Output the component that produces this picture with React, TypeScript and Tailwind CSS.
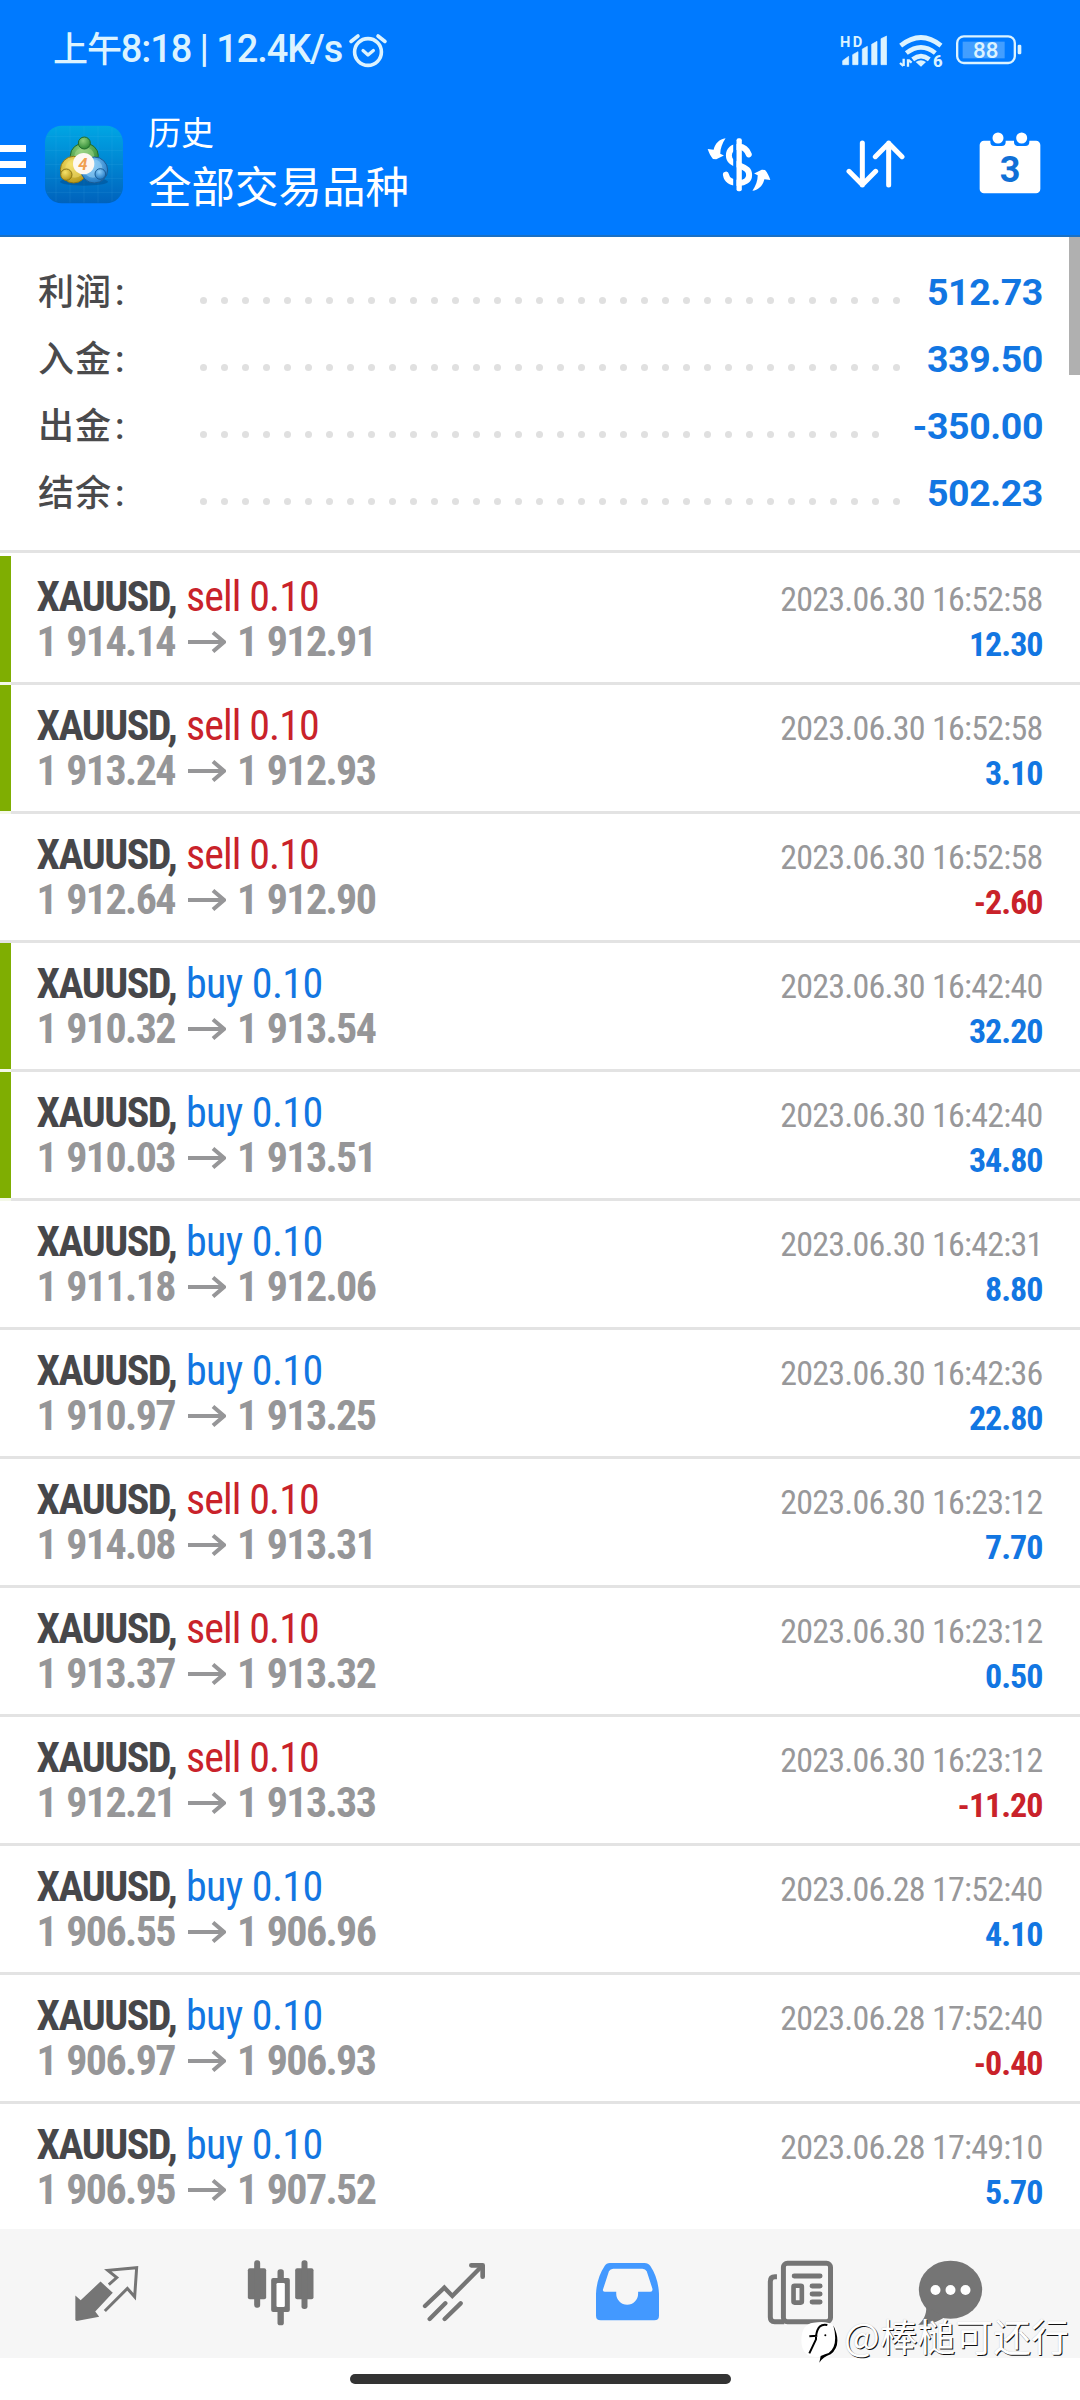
import type { ReactNode } from 'react';

type Deal = {
    side: 'sell' | 'buy';
    open: string;
    close: string;
    time: string;
    profit: string;
    marked?: boolean;
};

const summary = [
    { label: '利润', value: '512.73', dots: 34 },
    { label: '入金', value: '339.50', dots: 34 },
    { label: '出金', value: '-350.00', dots: 33 },
    { label: '结余', value: '502.23', dots: 34 },
];

const deals: Deal[] = [
    { side: 'sell', open: '1 914.14', close: '1 912.91', time: '2023.06.30 16:52:58', profit: '12.30', marked: true },
    { side: 'sell', open: '1 913.24', close: '1 912.93', time: '2023.06.30 16:52:58', profit: '3.10', marked: true },
    { side: 'sell', open: '1 912.64', close: '1 912.90', time: '2023.06.30 16:52:58', profit: '-2.60' },
    { side: 'buy', open: '1 910.32', close: '1 913.54', time: '2023.06.30 16:42:40', profit: '32.20', marked: true },
    { side: 'buy', open: '1 910.03', close: '1 913.51', time: '2023.06.30 16:42:40', profit: '34.80', marked: true },
    { side: 'buy', open: '1 911.18', close: '1 912.06', time: '2023.06.30 16:42:31', profit: '8.80' },
    { side: 'buy', open: '1 910.97', close: '1 913.25', time: '2023.06.30 16:42:36', profit: '22.80' },
    { side: 'sell', open: '1 914.08', close: '1 913.31', time: '2023.06.30 16:23:12', profit: '7.70' },
    { side: 'sell', open: '1 913.37', close: '1 913.32', time: '2023.06.30 16:23:12', profit: '0.50' },
    { side: 'sell', open: '1 912.21', close: '1 913.33', time: '2023.06.30 16:23:12', profit: '-11.20' },
    { side: 'buy', open: '1 906.55', close: '1 906.96', time: '2023.06.28 17:52:40', profit: '4.10' },
    { side: 'buy', open: '1 906.97', close: '1 906.93', time: '2023.06.28 17:52:40', profit: '-0.40' },
    { side: 'buy', open: '1 906.95', close: '1 907.52', time: '2023.06.28 17:49:10', profit: '5.70' },
];

function AlarmIcon() {
    return (
        <svg className="w-[40px] h-[37px]" viewBox="0 0 40 37" fill="none" stroke="currentColor" strokeWidth="3.6" strokeLinecap="round" strokeLinejoin="round">
            <circle cx="20" cy="20" r="13.4" />
            <path d="M3 9.5 10 4M37 9.5 30 4" />
            <path d="M15 18.5 20 23l5.4-4.5" strokeWidth="3.2" />
        </svg>
    );
}

function SignalIcon() {
    return (
        <svg className="w-[47px] h-[38px]" viewBox="0 -9 141 114" fill="currentColor">
            <text x="0" y="38" fontSize="44" fontWeight="700" textLength="67" className="font-['Roboto']">HD</text>
            <path d="M8 92V80L26 67V92ZM38 92V62L54 53V92ZM67 92V45L82 37V92ZM95 92V31L111 22V92ZM123 92V14L140 6V92Z" stroke="currentColor" strokeWidth="2" strokeLinejoin="round" />
        </svg>
    );
}

function WifiIcon() {
    return (
        <svg className="w-[46px] h-[46px]" viewBox="0 -18 138 138" fill="none" stroke="currentColor" strokeWidth="14">
            <path d="M5 35Q66-14 126 35" />
            <path d="M22 57Q66 23 109 57" />
            <path d="M41 76Q66 57 91 76" />
            <path d="M50 84Q66 74 81 84L66 98Z" fill="currentColor" stroke="none" />
            <path d="M14 74V96M3 87 13 96M27 98V76M38 86 28 78" strokeWidth="7" />
            <text x="102" y="100" fontSize="50" fontWeight="800" fill="currentColor" stroke="none" className="font-['Roboto']">6</text>
        </svg>
    );
}

function BatteryIcon() {
    return (
        <svg className="w-[67px] h-[30px]" viewBox="0 0 201 90" fill="currentColor">
            <rect x="3.5" y="4" width="173" height="80" rx="20" fill="none" stroke="currentColor" strokeWidth="7" />
            <rect x="20" y="20" width="126" height="50" opacity="0.3" />
            <rect x="185" y="29" width="11" height="29" rx="4" />
            <text x="89" y="68" fontSize="67" fontWeight="500" textAnchor="middle" className="font-['Roboto']">88</text>
        </svg>
    );
}

function AppLogo() {
    return (
        <svg className="w-[80px] h-[79px]" viewBox="0 0 240 237">
            <defs>
                <linearGradient id="tile" x1="0" y1="0" x2="0" y2="1">
                    <stop offset="0" stopColor="#00a6e4" />
                    <stop offset="0.5" stopColor="#0085d2" />
                    <stop offset="1" stopColor="#0062bc" />
                </linearGradient>
                <radialGradient id="green" cx="0.4" cy="0.3" r="0.7">
                    <stop offset="0" stopColor="#8fd07c" />
                    <stop offset="1" stopColor="#2f8a36" />
                </radialGradient>
                <radialGradient id="yellow" cx="0.4" cy="0.3" r="0.7">
                    <stop offset="0" stopColor="#f6e26a" />
                    <stop offset="1" stopColor="#b99a1c" />
                </radialGradient>
                <radialGradient id="blue" cx="0.4" cy="0.3" r="0.7">
                    <stop offset="0" stopColor="#8fd0fb" />
                    <stop offset="1" stopColor="#2079c4" />
                </radialGradient>
            </defs>
            <rect x="3" y="2" width="234" height="233" rx="50" fill="url(#tile)" />
            <path d="M36 8V229M78 4V233M120 4V233M162 4V233M204 8V229M8 34H232M4 76H236M4 118H236M4 160H236M8 202H232" stroke="#5cc4ee" strokeOpacity="0.18" strokeWidth="2" />
            <ellipse cx="120" cy="170" rx="72" ry="12" fill="#00407c" opacity="0.4" />
            <g strokeWidth="3">
                <ellipse cx="121" cy="92" rx="42" ry="38" fill="url(#green)" stroke="#1f6b2c" />
                <ellipse cx="121" cy="92" rx="30" ry="25" fill="#a4d889" opacity="0.5" />
                <ellipse cx="89" cy="134" rx="40" ry="40" fill="url(#yellow)" stroke="#8a7516" />
                <ellipse cx="92" cy="130" rx="28" ry="28" fill="#f3df72" opacity="0.5" />
                <ellipse cx="151" cy="135" rx="40" ry="39" fill="url(#blue)" stroke="#1a5c96" />
                <ellipse cx="147" cy="130" rx="28" ry="28" fill="#8fcdf5" opacity="0.6" />
                <circle cx="121" cy="54" r="18" fill="url(#green)" stroke="#1f6b2c" />
                <circle cx="67" cy="149" r="17" fill="url(#yellow)" stroke="#8a7516" />
                <circle cx="169" cy="147" r="16" fill="url(#blue)" stroke="#1a5c96" />
            </g>
            <circle cx="119" cy="116" r="32" fill="#fdf8f2" />
            <text x="117" y="134" fontSize="50" fontWeight="700" fontStyle="italic" textAnchor="middle" fill="#f0a050" className="font-['Roboto']">4</text>
        </svg>
    );
}

function CurrencyIcon() {
    const arrow = 'M56 3C38 6 24 18 20 38L2 36C6 48 11 58 18 66L28 67 51 55 40 50C40 34 46 18 56 3Z';
    return (
        <svg className="w-[64px] h-[55px]" viewBox="0 0 193 165" fill="white">
            <path d={arrow} />
            <path d={arrow} transform="rotate(180 96.5 82.5)" />
            <path d="M126 52C120 36 108 29 96 29C76 29 66 40 66 55C66 76 86 80 100 86C120 94 127 100 127 114C127 130 114 138 96 138C74 138 60 130 57 113" fill="none" stroke="white" strokeWidth="18" strokeLinecap="round" />
            <path d="M84 10V156" stroke="#007aff" strokeWidth="10" />
            <rect x="89" y="3" width="16" height="160" rx="6" />
        </svg>
    );
}

function SortIcon() {
    return (
        <svg className="w-[59px] h-[48px]" viewBox="0 0 177 144" fill="none" stroke="white" strokeWidth="15" strokeLinecap="round" strokeLinejoin="round">
            <path d="M49 9V135M9 94 49 134 89 94" />
            <path d="M128 135V9M88 50 128 10 168 50" />
        </svg>
    );
}

function CalendarIcon() {
    return (
        <svg className="w-[62px] h-[62px]" viewBox="0 0 186 186">
            <rect x="2" y="26" width="182" height="158" rx="13" fill="white" />
            <rect x="34" y="6" width="46" height="36" rx="12" fill="#007aff" />
            <rect x="105" y="6" width="46" height="36" rx="12" fill="#007aff" />
            <circle cx="57" cy="18" r="16.5" fill="white" />
            <circle cx="128" cy="18" r="16.5" fill="white" />
            <text x="93" y="151" fontSize="108" fontWeight="700" textAnchor="middle" fill="#1070d6" className="font-['Roboto']">3</text>
        </svg>
    );
}

function TradeIcon() {
    return (
        <svg className="w-[65px] h-[57px]" viewBox="0 0 196 172" fill="currentColor">
            <path d="M80 50 117 84 64 140 76 156 8 169 4 166V92L20 106Z" />
            <path d="M105 59 129 38 102 16 189 8 183 96 161 71 93 139" fill="none" stroke="currentColor" strokeWidth="9" />
        </svg>
    );
}

function CandlesIcon() {
    return (
        <svg className="w-[67px] h-[66px]" viewBox="0 0 200 198" fill="currentColor">
            <rect x="2" y="25" width="55" height="93" rx="6" />
            <rect x="21" y="1" width="18" height="142" rx="8" />
            <rect x="91" y="28" width="19" height="168" rx="8" />
            <rect x="72" y="54" width="56" height="102" rx="6" />
            <rect x="88" y="69" width="25" height="72" rx="4" fill="white" />
            <rect x="144" y="25" width="55" height="93" rx="6" />
            <rect x="163" y="1" width="18" height="146" rx="8" />
        </svg>
    );
}

function TrendIcon() {
    return (
        <svg className="w-[64px] h-[60px]" viewBox="0 0 192 180" fill="none" stroke="currentColor" strokeWidth="13">
            <path d="M9 132 67 77 91 102 180 12" strokeLinecap="round" />
            <path d="M148 10H182V44" strokeWidth="14" strokeLinecap="round" strokeLinejoin="round" />
            <path d="M23 171 70 124M68 171 116 124" strokeLinecap="round" />
        </svg>
    );
}

function InboxIcon() {
    return (
        <svg className="w-[65px] h-[59px]" viewBox="0 0 194 178">
            <path
                fill="#4399ff"
                fillRule="evenodd"
                d="M44 3H148Q160 3 166 12Q190 48 192 96V162Q192 176 178 176H16Q2 176 2 162V96Q4 48 28 12Q33 3 44 3ZM54 20Q45 20 41 28L24 80Q20 90 28 90H63V96A33 33 0 0 0 129 96V90H166Q174 90 172 80L155 28Q151 20 142 20Z"
            />
        </svg>
    );
}

function NewsIcon() {
    return (
        <svg className="w-[67px] h-[65px]" viewBox="0 0 202 195" fill="none" stroke="currentColor">
            <rect x="49.5" y="9.5" width="142" height="176" rx="12" strokeWidth="15" />
            <path d="M30 50H24Q10 50 10 64V172Q10 185.500 23 185.500H52" strokeWidth="15" />
            <path d="M82 48H160M136 78H160M136 102H160M136 126H160" strokeWidth="15" strokeLinecap="round" />
            <rect x="80" y="77" width="25" height="51" rx="3" strokeWidth="14" />
        </svg>
    );
}

function ChatIcon() {
    return (
        <svg className="w-[65px] h-[66px]" viewBox="0 0 194 198" fill="currentColor">
            <ellipse cx="97" cy="89" rx="95" ry="87" />
            <path d="M24 140C26 165 14 182 0 194C30 194 60 186 80 170Z" />
            <circle cx="52" cy="90" r="15" fill="white" />
            <circle cx="97" cy="90" r="15" fill="white" />
            <circle cx="142" cy="90" r="15" fill="white" />
        </svg>
    );
}

function DealRow({ deal }: { deal: Deal }) {
    const loss = deal.profit.startsWith('-');
    return (
        <div className="flex h-[129px] shrink-0 border-b-[3px] border-[#e3e3e3]">
            <div className={deal.marked ? 'w-[10.500px] shadow-[0_3px_0_#f4f8e8] bg-[#7fae02]' : 'w-[10.500px]'} />
            <div className="flex flex-1 justify-between pl-[26px] pr-[37.500px] whitespace-nowrap [font-stretch:75%]">
                <div className="pt-[18px] text-[42px] leading-[45px]">
                    <div>
                        <span className="font-bold tracking-[-1.5px] text-[#47474a]">XAUUSD,</span>{' '}
                        <span className={deal.side === 'sell' ? 'tracking-[-0.9px] text-[#c9222a]' : 'tracking-[-0.6px] text-[#1276e2]'}>{deal.side} 0.10</span>
                    </div>
                    <div className="flex items-center font-bold text-[#969698] tracking-[-1.6px] [word-spacing:2px]">
                        <span>{deal.open}</span>
                        <svg className="ml-[13px] mr-[11px] w-[38px] h-[22px]" viewBox="0 0 38 22" fill="none" stroke="currentColor" strokeWidth="4">
                            <path d="M0 11H36M25 1.500 36 11 25 20.500" />
                        </svg>
                        <span>{deal.close}</span>
                    </div>
                </div>
                <div className="pt-[21px] text-right text-[34px] leading-[45px]">
                    <div className="tracking-[-0.75px] text-[#98989a]">{deal.time}</div>
                    <div className={loss ? 'font-bold tracking-[-1px] text-[#c9222a]' : 'font-bold tracking-[-1px] text-[#1276e2]'}>{deal.profit}</div>
                </div>
            </div>
        </div>
    );
}

function NavItem({ children }: { children: ReactNode }) {
    return <button className="flex w-[173.500px] justify-center">{children}</button>;
}

export default function App() {
    return (
        <div className="relative flex h-[2400px] w-[1080px] flex-col overflow-hidden bg-white font-['Roboto','Noto_Sans_CJK_SC',sans-serif]">
            {/* Header */}
            <header className="h-[237px] shrink-0 border-b-2 border-[#1a70c4] bg-[#007aff]">
                <div className="flex h-[100px] items-center justify-between pl-[53px] pr-[57px] text-[#dcf3ff]">
                    <div className="flex items-center">
                        <span className="whitespace-pre text-[38px] leading-[44px] font-medium tracking-[-1.1px]">
                            <span className="text-[35px]">上午</span>8:18 | 12.4K/s
                        </span>
                        <span className="ml-[6px]"><AlarmIcon /></span>
                    </div>
                    <div className="flex items-center">
                        <SignalIcon />
                        <span className="ml-[12px] mt-[2px]"><WifiIcon /></span>
                        <span className="ml-[11px]"><BatteryIcon /></span>
                    </div>
                </div>
                <div className="flex h-[128px] items-center">
                    <div className="flex w-[26px] flex-col gap-[9px]">
                        <div className="h-[7px] bg-white" />
                        <div className="h-[7px] bg-white" />
                        <div className="h-[7px] bg-white" />
                    </div>
                    <div className="ml-[18px]"><AppLogo /></div>
                    <div className="ml-[24px] flex-1 text-white">
                        <div className="text-[33px] leading-[48px]">历史</div>
                        <div className="mt-[1px] text-[43.500px] leading-[60px]">全部交易品种</div>
                    </div>
                    <div className="flex items-center pr-[39px]">
                        <CurrencyIcon />
                        <span className="ml-[75px]"><SortIcon /></span>
                        <span className="ml-[74px] mb-[3px]"><CalendarIcon /></span>
                    </div>
                </div>
            </header>

            {/* Account summary */}
            <section className="flex h-[316px] shrink-0 flex-col border-b-[3px] border-[#e3e3e3] pt-[22px]">
                {summary.map((row) => (
                    <div key={row.label} className="flex h-[67px] items-center justify-between pl-[38px] pr-[37px]">
                        <div className="flex w-[162px] text-[36px] font-medium tracking-[1px] text-[#4a4a4c]">
                            {row.label}
                            <span className="ml-[3px]">:</span>
                        </div>
                        <div className="mt-[16px] flex flex-1 gap-[14.500px]">
                            {Array.from({ length: row.dots }, (_, i) => (
                                <div key={i} className="size-[6.500px] shrink-0 rounded-full bg-[#e0e0e0]" />
                            ))}
                        </div>
                        <div className="text-[37.500px] font-bold tracking-[-0.4px] text-[#1276e2]">{row.value}</div>
                    </div>
                ))}
            </section>

            {/* Deal history */}
            <main className="flex min-h-0 flex-1 flex-col overflow-hidden pt-[3px]">
                {deals.map((deal, i) => (
                    <DealRow key={i} deal={deal} />
                ))}
            </main>

            {/* Bottom navigation */}
            <nav className="flex h-[129px] shrink-0 items-start bg-[#f6f6f6] pl-[20px] pt-[31px] text-[#757575]">
                <NavItem><span className="mt-[5px]"><TradeIcon /></span></NavItem>
                <NavItem><CandlesIcon /></NavItem>
                <NavItem><span className="mt-[2px]"><TrendIcon /></span></NavItem>
                <NavItem><span className="mt-[2px]"><InboxIcon /></span></NavItem>
                <NavItem><NewsIcon /></NavItem>
                <button className="flex w-[126px] justify-center"><ChatIcon /></button>
            </nav>
            <div className="flex h-[42px] shrink-0 justify-center pt-[16px]">
                <div className="h-[10px] w-[381px] rounded-full bg-[#333333]" />
            </div>

            {/* Scroll thumb */}
            <div className="absolute right-0 top-[237px] h-[138px] w-[11px] bg-[#b0b0b0]" />

            {/* Author mark */}
            <div className="absolute left-[800px] top-[2314px] flex items-center">
                <svg className="w-[42px] h-[50px]" viewBox="0 0 126 150">
                    <path d="M40 26Q112 14 116 66Q116 122 76 130L58 146 62 128Q6 136 4 80Q4 30 40 26Z" fill="white" />
                    <path d="M100 34Q128 92 92 121Q70 128 58 146L62 126Q76 120 86 117Q116 96 100 34Z" fill="black" />
                    <path d="M82 33Q54 26 48 66V76L28 118M28 67 52 65" fill="none" stroke="black" strokeWidth="6" />
                    <circle cx="76" cy="64" r="3" fill="black" />
                </svg>
                <span className="ml-[2px] whitespace-nowrap font-['Noto_Sans_CJK_SC',sans-serif] text-[37.800px] leading-[50px] text-white [text-shadow:1px_1px_0_#111,0_0_1px_#bbb] -mt-[8px]">@棒槌可还行</span>
            </div>
        </div>
    );
}
